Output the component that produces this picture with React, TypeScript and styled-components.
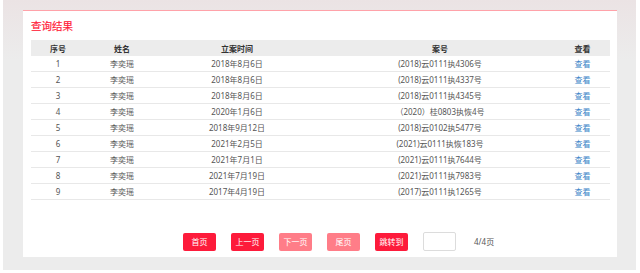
import React from "react";
import styled, { createGlobalStyle } from "styled-components";

const Global = createGlobalStyle`
  html, body { margin: 0; padding: 0; background: #ffffff; }
  body { font-family: "Noto Sans", "Noto Sans CJK SC", sans-serif; }
`;

const Panel = styled.div`
  box-sizing: border-box;
  width: 633px;
  height: 270px;
  margin-left: 3px;
  padding: 10px 19px 13px 20px;
  background: linear-gradient(180deg, #ebe3e4 0px, #ececec 60px, #ececec 100%);
`;

const Card = styled.div`
  box-sizing: border-box;
  height: 247px;
  background: #ffffff;
  border-top: 1px solid #ffa2a9;
  padding: 0 7px 0 8px;
  display: flex;
  flex-direction: column;
`;

const Title = styled.div`
  height: 29px;
  line-height: 30px;
  font-size: 10.5px;
  color: #ff1a38;
  -webkit-text-stroke: 0.2px #ff1a38;
`;

const Table = styled.table`
  width: 579px;
  border-collapse: collapse;
  table-layout: fixed;
  font-size: 8px;
`;

const Th = styled.th<{ $w: number; $pr?: number }>`
  width: ${(p) => p.$w}px;
  height: 16px;
  padding: 0 ${(p) => p.$pr ?? 0}px 0 0;
  background: #ececec;
  color: #333333;
  font-weight: 700;
  text-align: center;
  box-sizing: border-box;
`;

const Td = styled.td<{ $pr?: number; $link?: boolean }>`
  height: 15px;
  padding: 0 ${(p) => p.$pr ?? 0}px 0 0;
  color: ${(p) => (p.$link ? "#3a84c8" : "#555555")};
  text-align: center;
  border-bottom: 1px solid #e8e8e8;
  cursor: ${(p) => (p.$link ? "pointer" : "default")};
`;

const Pager = styled.div`
  margin-top: 32px;
  padding-left: 152px;
  display: flex;
  align-items: center;
  gap: 15px;
`;

const PageButton = styled.button<{ $disabled?: boolean }>`
  width: 33px;
  height: 18px;
  padding: 0;
  border: none;
  border-radius: 2px;
  background: ${(p) => (p.$disabled ? "#ff7d88" : "#fd1b3b")};
  color: #ffffff;
  font-family: inherit;
  font-size: 8px;
  line-height: 18px;
`;

const PageInput = styled.input`
  box-sizing: border-box;
  width: 33px;
  height: 19px;
  border: 1px solid #dcdcdc;
  border-radius: 2px;
  background: #ffffff;
`;

const PageInfo = styled.span`
  margin-left: 3px;
  font-size: 8px;
  color: #555555;
`;

const rows = [
  ["1", "李奕瑶", "2018年8月6日", "(2018)云0111执4306号"],
  ["2", "李奕瑶", "2018年8月6日", "(2018)云0111执4337号"],
  ["3", "李奕瑶", "2018年8月6日", "(2018)云0111执4345号"],
  ["4", "李奕瑶", "2020年1月6日", "（2020）桂0803执恢4号"],
  ["5", "李奕瑶", "2018年9月12日", "(2018)云0102执5477号"],
  ["6", "李奕瑶", "2021年2月5日", "(2021)云0111执恢183号"],
  ["7", "李奕瑶", "2021年7月1日", "(2021)云0111执7644号"],
  ["8", "李奕瑶", "2021年7月19日", "(2021)云0111执7983号"],
  ["9", "李奕瑶", "2017年4月19日", "(2017)云0111执1265号"],
];

export default function App() {
  return (
    <>
      <Global />
      <Panel>
        <Card>
          <Title>查询结果</Title>
          <Table>
            <thead>
              <tr>
                <Th $w={54}>序号</Th>
                <Th $w={74}>姓名</Th>
                <Th $w={156}>立案时间</Th>
                <Th $w={250}>案号</Th>
                <Th $w={45} $pr={10}>查看</Th>
              </tr>
            </thead>
            <tbody>
              {rows.map((r) => (
                <tr key={r[0]}>
                  <Td>{r[0]}</Td>
                  <Td>{r[1]}</Td>
                  <Td>{r[2]}</Td>
                  <Td>{r[3]}</Td>
                  <Td $link $pr={10}>查看</Td>
                </tr>
              ))}
            </tbody>
          </Table>
          <Pager>
            <PageButton>首页</PageButton>
            <PageButton>上一页</PageButton>
            <PageButton $disabled>下一页</PageButton>
            <PageButton $disabled>尾页</PageButton>
            <PageButton>跳转到</PageButton>
            <PageInput />
            <PageInfo>4/4页</PageInfo>
          </Pager>
        </Card>
      </Panel>
    </>
  );
}
